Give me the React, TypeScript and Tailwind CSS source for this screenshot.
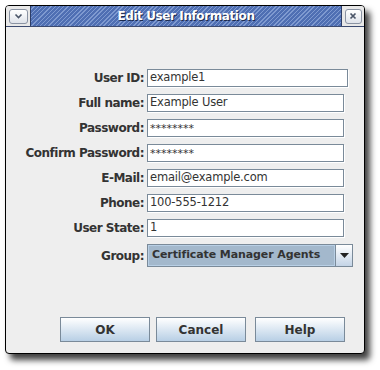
import React from 'react';

const fields = [
    { label: 'User ID:', value: 'example1', width: 'w-[201px]' },
    { label: 'Full name:', value: 'Example User', width: 'w-[197px]' },
    { label: 'Password:', value: '********', width: 'w-[197px]', pw: true },
    { label: 'Confirm Password:', value: '********', width: 'w-[197px]', pw: true },
    { label: 'E-Mail:', value: 'email@example.com', width: 'w-[197px]' },
    { label: 'Phone:', value: '100-555-1212', width: 'w-[197px]' },
    { label: 'User State:', value: '1', width: 'w-[197px]' },
];

const font = "font-['DejaVu_Sans',sans-serif]";

const App = () => {
    return (
        <div className="w-[380px] h-[370px] bg-white pl-[5px] pt-[5px]">
            <div className="w-[360px] h-[349px] rounded-[4px] border border-black bg-[#eeeeee] shadow-[5px_6px_6px_rgba(0,0,0,0.75)] flex flex-col overflow-hidden">
                {/* title bar */}
                <div className="h-[21px] flex items-stretch bg-[#e8e8e8] border-b border-[#3b4a70]">
                    <div className="w-[24px] flex items-center justify-center">
                        <div className="w-[19px] h-[15px] rounded-[3px] border border-[#8a93a3] bg-gradient-to-b from-white to-[#dfe3ea] flex items-center justify-center">
                            <svg width="9" height="6" viewBox="0 0 9 6">
                                <path d="M1.5 1.5 L4.5 4.5 L7.5 1.5" fill="none" stroke="#4a5568" strokeWidth="1.6" />
                            </svg>
                        </div>
                    </div>
                    <div className="flex-1 flex items-center justify-center border-l border-r border-[#2d3d66] bg-[#5b7bbd] bg-[repeating-linear-gradient(135deg,#4f6fb3_0px,#4f6fb3_2px,#7f9ad0_2px,#7f9ad0_3px)]">
                        <span className={`${font} text-[12px] font-bold text-white tracking-[-0.4px] [text-shadow:1px_1px_0_#1c2a4d]`}>
                            Edit User Information
                        </span>
                    </div>
                    <div className="w-[22px] flex items-center justify-center">
                        <div className="w-[17px] h-[15px] rounded-[3px] border border-[#8a93a3] bg-gradient-to-b from-white to-[#dfe3ea] flex items-center justify-center">
                            <svg width="8" height="8" viewBox="0 0 8 8">
                                <path d="M1.5 1.5 L6.5 6.5 M6.5 1.5 L1.5 6.5" fill="none" stroke="#4a5568" strokeWidth="1.7" />
                            </svg>
                        </div>
                    </div>
                </div>

                {/* form */}
                <div className="pt-[42px] flex flex-col gap-[7px]">
                    {fields.map((f) => (
                        <div key={f.label} className="flex items-center">
                            <div className={`${font} w-[138px] text-right text-[12px] font-bold text-[#333333] tracking-[-0.5px] whitespace-nowrap`}>
                                {f.label}
                            </div>
                            <div className={`ml-[3px] ${f.width} h-[18px] bg-white border border-[#7a8a99] shadow-[1px_1px_0_#ffffff] flex items-center px-[2px]`}>
                                <span className={`${font} ${f.pw ? 'text-[11px]' : 'text-[11.5px] tracking-[-0.2px]'} text-[#333333] leading-none whitespace-nowrap`}>
                                    {f.value}
                                </span>
                            </div>
                        </div>
                    ))}
                    <div className="flex items-center">
                        <div className={`${font} w-[138px] text-right text-[12px] font-bold text-[#333333] tracking-[-0.5px]`}>
                            Group:
                        </div>
                        <div className="ml-[3px] w-[206px] h-[23px] border border-[#7a8a99] flex">
                            <div className="flex-1 bg-[#a3b8cc] border border-[#b8cfe5] flex items-center px-[3px]">
                                <span className={`${font} text-[11px] font-bold text-[#333333] tracking-[-0.1px] whitespace-nowrap`}>
                                    Certificate Manager Agents
                                </span>
                            </div>
                            <div className="w-[17px] border-l border-[#7a8a99] bg-gradient-to-b from-white to-[#c4d4e6] flex items-center justify-center">
                                <svg width="9" height="5" viewBox="0 0 9 5">
                                    <path d="M0 0 H9 L4.5 5 Z" fill="#222" />
                                </svg>
                            </div>
                        </div>
                    </div>
                </div>

                {/* buttons */}
                <div className="mt-auto mb-[11px] flex justify-end pr-[19px]">
                    {['OK', 'Cancel', 'Help'].map((b, i) => (
                        <button
                            key={b}
                            className={`${font} ${i === 0 ? '' : i === 1 ? 'ml-[6px]' : 'ml-[9px]'} w-[90px] h-[25px] border border-[#7a8a99] bg-gradient-to-b from-white to-[#b8cfe5] text-[12px] font-bold text-[#333333]`}
                        >
                            {b}
                        </button>
                    ))}
                </div>
            </div>
        </div>
    );
};

export default App;
